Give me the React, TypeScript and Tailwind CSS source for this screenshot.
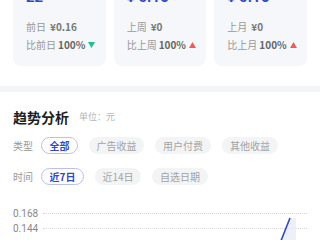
import React from "react";

const Up = () => (
  <svg width="7" height="6" viewBox="0 0 7 6" className="ml-[3px]">
    <polygon points="3.5,0 7,6 0,6" fill="#ef5b5b" />
  </svg>
);
const Down = () => (
  <svg width="7" height="6" viewBox="0 0 7 6" className="ml-[3px]">
    <polygon points="0,0 7,0 3.5,6" fill="#1fbf8a" />
  </svg>
);

function Card({ big, label, val, cmp, up }: { big: string; label: string; val: string; cmp: string; up: boolean }) {
  return (
    <div className="rounded-[8px] bg-[#f5f7fa] pl-[13px] pr-[6px] pt-[18px] pb-[13px]">
      <div
        className="text-[15px] leading-[18px] font-bold text-[#3448c2] whitespace-nowrap"
        style={{ fontFamily: "Roboto, sans-serif" }}
      >
        {big}
      </div>
      <div className="mt-[13px] flex items-center text-[10px] leading-[16px] whitespace-nowrap">
        <span className="text-[#999]">{label}</span>
        <span className="ml-[4px] font-bold text-[#777]">{val}</span>
      </div>
      <div className="mt-[2px] flex items-center text-[10px] leading-[16px] whitespace-nowrap">
        <span className="text-[#999]">{cmp}</span>
        <span className="ml-[2px] font-bold text-[#666]">100%</span>
        {up ? <Up /> : <Down />}
      </div>
    </div>
  );
}

function Chip({ text, active, w }: { text: string; active?: boolean; w: string }) {
  return (
    <div
      className={
        active
          ? `flex h-[17px] shrink-0 items-center justify-center whitespace-nowrap rounded-full border border-[#b9c0ea] bg-white text-[10px] font-bold text-[#3448c2] ${w}`
          : `flex h-[17px] shrink-0 items-center justify-center whitespace-nowrap rounded-full bg-[#f3f4f6] text-[10px] text-[#a3a3a3] ${w}`
      }
    >
      {text}
    </div>
  );
}

export default function App() {
  return (
    <div
      className="w-[320px] h-[240px] overflow-hidden bg-[#f4f5f7]"
      style={{ fontFamily: '"Noto Sans CJK SC", "Noto Sans", sans-serif' }}
    >
      <div className="-mt-[30px] bg-white px-[13px] pb-[20px]">
        <div className="grid grid-cols-3 gap-[8px]">
          <Card big="22" label="前日" val="¥0.16" cmp="比前日" up={false} />
          <Card big="¥ 0.16" label="上周" val="¥0" cmp="比上周" up />
          <Card big="¥ 0.16" label="上月" val="¥0" cmp="比上月" up />
        </div>
      </div>
      <div className="mt-[6px] bg-white px-[13px] pt-[14px] pb-[20px] relative">
        <div className="flex items-center h-[22px]">
          <span className="text-[14px] font-bold text-[#1f1f1f]">趋势分析</span>
          <span className="ml-[10px] text-[9px] text-[#b5b5b5]">单位：元</span>
        </div>
        <div className="mt-[9px] flex items-center gap-[11px]">
          <span className="w-[19px] shrink-0 whitespace-nowrap text-[10px] text-[#999] mr-[-2px]">类型</span>
          <Chip text="全部" active w="w-[37px]" />
          <Chip text="广告收益" w="w-[55px]" />
          <Chip text="用户付费" w="w-[56px]" />
          <Chip text="其他收益" w="w-[56px]" />
        </div>
        <div className="mt-[14px] flex items-center gap-[11px]">
          <span className="w-[19px] shrink-0 whitespace-nowrap text-[10px] text-[#999] mr-[-2px]">时间</span>
          <Chip text="近7日" active w="w-[43px]" />
          <Chip text="近14日" w="w-[46px]" />
          <Chip text="自选日期" w="w-[56px]" />
        </div>
        <div className="relative mt-[21px]">
          <div className="flex h-[15px] items-center">
            <span className="w-[30px] shrink-0 text-[10px] text-[#888]" style={{ fontFamily: "Roboto, sans-serif" }}>0.168</span>
            <div className="flex-1 border-t border-dotted border-[#d6d6d6]" />
          </div>
          <div className="flex h-[15px] items-center">
            <span className="w-[30px] shrink-0 text-[10px] text-[#888]" style={{ fontFamily: "Roboto, sans-serif" }}>0.144</span>
            <div className="flex-1 border-t border-dotted border-[#d6d6d6]" />
          </div>
          <div className="h-[20px]" />
          <svg className="absolute left-[-13px] top-0" width="320" height="50" viewBox="0 0 320 50">
            <polygon points="275,50 290,12 296,12 296,50" fill="#e9ecfa" opacity="0.8" />
            <polyline points="275,50 290,12" fill="none" stroke="#3448c2" strokeWidth="1.6" />
          </svg>
        </div>
      </div>
    </div>
  );
}
